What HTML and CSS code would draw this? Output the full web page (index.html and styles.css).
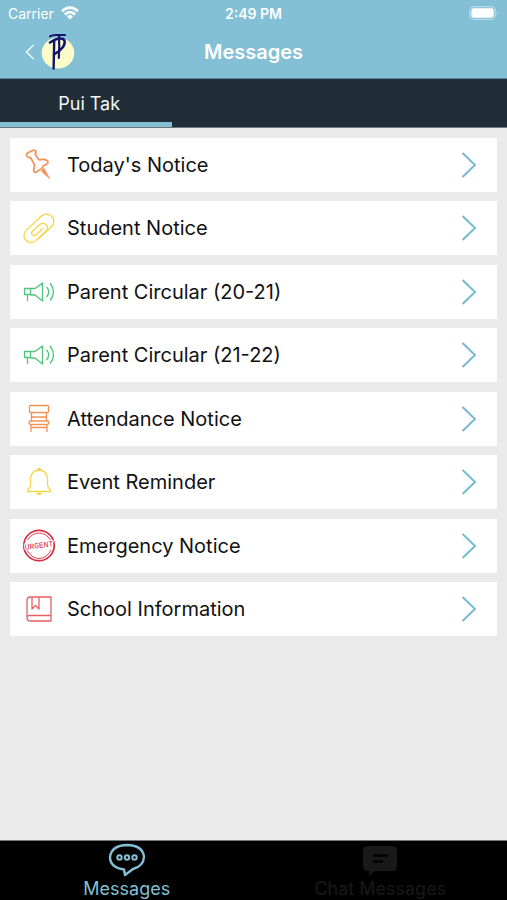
FILE: index.html
```html
<!DOCTYPE html>
<html lang="en">
<head>
    <meta charset="utf-8">
    <meta name="viewport" content="width=device-width, initial-scale=1">
    <title>Messages</title>
    <link rel="stylesheet" href="styles.css">
</head>
<body>

<header class="header">
    <div class="status">
        <div class="carrier">
            <span>Carrier</span>
            <svg width="18" height="14" viewBox="0 0 18 14" fill="none" stroke="#fff" stroke-width="2.6">
                <path d="M1 5.2Q9-2 17 5.2M3.8 8.4q5.2-4.4 10.4 0"/>
                <path d="M9 13.4L5.9 10.3q3.1-2.4 6.2 0z" fill="#fff" stroke="none"/>
            </svg>
        </div>
        <div class="time">2:49 PM</div>
        <div class="battery">
            <svg width="30" height="14" viewBox="0 0 30 14">
                <rect x="0.7" y="0.7" width="25.6" height="12.6" rx="4" fill="none" stroke="#b4dbe7" stroke-width="1.2"/>
                <rect x="2.3" y="2.3" width="22.4" height="9.4" rx="2.4" fill="#fff"/>
                <path d="M27.7 5q2 2 0 4z" fill="#b4dbe7"/>
            </svg>
        </div>
    </div>
    <div class="nav">
        <button class="back" type="button" aria-label="Back">
            <svg width="10" height="16" viewBox="0 0 10 16" fill="none" stroke="#fff" stroke-width="1.2"><path d="M8.6 1L1.4 8l7.2 7"/></svg>
            <svg width="34" height="38" viewBox="0 0 34 38">
                <ellipse cx="17" cy="20" rx="16.3" ry="15.5" fill="#fcfbc9"/>
                <g fill="none" stroke="#14146c" stroke-linecap="round" stroke-linejoin="round">
                    <path d="M9 3.4q2-1.4 6-1.4h9" stroke-width="2.2"/>
                    <path d="M13.2 8L12.600 35.500" stroke-width="2.400"/>
                    <path d="M18 3q.6 11-.2 22" stroke-width="2.200"/>
                    <path d="M9 9.500q8-5.500 13-3.500 3.500 2 0 8-3 4-9 7.500" stroke-width="2.600"/>
                </g>
            </svg>
        </button>
        <h1 class="title">Messages</h1>
    </div>
</header>

<nav class="tabs">
    <button class="tab" type="button">Pui Tak</button>
</nav>

<main class="content">
    <ul class="list">
        <li class="item">
            <a class="link" href="#today">
                <svg class="icon orange" viewBox="0 0 34 34">
                    <path d="M4.500 7.500Q4 6 5.500 5l5-2.500q2.500-1 3.500 1 .5 1.500-1 2.500l4 6q5-1.500 8 .5 2 1.500 0 3.500-1.500 1-3.500 1.500-1.500 4-5.500 5-1 2-2.500 2-2.500-.5-1.500-4.500l.5-3.500-4-7q-3 .5-4-2z" stroke-width="1.700"/>
                    <path d="M19 23l9 8-6-11z" fill="currentColor" stroke-width="0.500"/>
                </svg>
                <span class="label">Today's Notice</span>
                <svg class="arrow" viewBox="0 0 16 28"><path d="M1.5 2L14 14 1.5 26"/></svg>
            </a>
        </li>
        <li class="item">
            <a class="link" href="#student">
                <svg class="icon yellow" viewBox="0 0 34 34">
                    <path transform="rotate(-43 17 17)" d="M20 20H10a2.500 2.500 0 0 1 0-5h10a4.500 4.500 0 0 1 0 9H6a7 7 0 0 1 0-14h21a7 7 0 0 1 0 14.500H8"/>
                </svg>
                <span class="label">Student Notice</span>
                <svg class="arrow" viewBox="0 0 16 28"><path d="M1.5 2L14 14 1.5 26"/></svg>
            </a>
        </li>
        <li class="item">
            <a class="link" href="#circular-20-21">
                <svg class="icon green" viewBox="0 0 34 34">
                    <path d="M2.5 13.5h6v6h-6zM5.500 19.500V26M8.500 13.500h4.500l7.500-5.500v18l-7.500-6H8.500M24.500 12q4.500 4.500 0 10M28 8q7 9 0 17.500"/>
                </svg>
                <span class="label">Parent Circular (20-21)</span>
                <svg class="arrow" viewBox="0 0 16 28"><path d="M1.5 2L14 14 1.5 26"/></svg>
            </a>
        </li>
        <li class="item">
            <a class="link" href="#circular-21-22">
                <svg class="icon green" viewBox="0 0 34 34">
                    <path d="M2.5 13.5h6v6h-6zM5.500 19.500V26M8.500 13.500h4.500l7.500-5.500v18l-7.500-6H8.500M24.500 12q4.500 4.500 0 10M28 8q7 9 0 17.500"/>
                </svg>
                <span class="label">Parent Circular (21-22)</span>
                <svg class="arrow" viewBox="0 0 16 28"><path d="M1.5 2L14 14 1.5 26"/></svg>
            </a>
        </li>
        <li class="item">
            <a class="link" href="#attendance">
                <svg class="icon orange" viewBox="0 0 34 34">
                    <rect x="7.5" y="3.5" width="19" height="7" rx="1"/>
                    <path d="M9.5 10.5v8.500M24.500 10.500v8.500M9.500 15h15M9 30v-7.500M25 30v-7.500M9 25.500h16"/>
                    <rect x="7" y="19" width="20" height="3.500" rx="1.700"/>
                </svg>
                <span class="label">Attendance Notice</span>
                <svg class="arrow" viewBox="0 0 16 28"><path d="M1.5 2L14 14 1.5 26"/></svg>
            </a>
        </li>
        <li class="item">
            <a class="link" href="#event">
                <svg class="icon yellow" viewBox="0 0 34 34">
                    <path d="M17 5q7.500.5 8.500 8v7q.5 3 3 5v1.500h-23V25q3-2 3-5v-7Q9.500 5.500 17 5z"/>
                    <path d="M15.500 4.500q1.500-2 3 0M15 28.500q2 1.500 4 0z"/>
                </svg>
                <span class="label">Event Reminder</span>
                <svg class="arrow" viewBox="0 0 16 28"><path d="M1.5 2L14 14 1.5 26"/></svg>
            </a>
        </li>
        <li class="item">
            <a class="link" href="#emergency">
                <svg class="icon urgent" viewBox="0 0 34 34">
                    <circle cx="17" cy="16.500" r="15.200" stroke-width="1.700"/>
                    <path d="M5.500 11Q10 4 17 4T28.500 11M5 21q4.500 8.500 12 8.500T29 21" stroke-width="0.900"/>
                    <text class="stamp" x="17" y="19" transform="rotate(-7 17 17)">URGENT</text>
                </svg>
                <span class="label">Emergency Notice</span>
                <svg class="arrow" viewBox="0 0 16 28"><path d="M1.5 2L14 14 1.5 26"/></svg>
            </a>
        </li>
        <li class="item">
            <a class="link" href="#school">
                <svg class="icon red" viewBox="0 0 34 34">
                    <path d="M29 23.500V5H8.500Q5 5 5 8.500V26q0 3 3.500 3H29v-5.500H8Q5 23.500 5 26M10 5v12l3.500-3.500 3.500 3.500V5"/>
                </svg>
                <span class="label">School Information</span>
                <svg class="arrow" viewBox="0 0 16 28"><path d="M1.5 2L14 14 1.5 26"/></svg>
            </a>
        </li>
    </ul>
</main>

<footer class="bottom">
    <button class="bottom-tab active" type="button">
        <svg width="38" height="34" viewBox="0 0 38 34" fill="none" stroke="currentColor">
            <path d="M16 26.500Q2 24.500 2 14 3.500 2.500 19 2q16 .5 17 12-.5 9-11 12L17 32z" stroke-width="2.400" stroke-linejoin="round"/>
            <g stroke-width="2"><circle cx="11.500" cy="14.500" r="2.200"/><circle cx="19" cy="14.500" r="2.200"/><circle cx="26.500" cy="14.500" r="2.200"/></g>
        </svg>
        <span>Messages</span>
    </button>
    <button class="bottom-tab" type="button">
        <svg width="38" height="34" viewBox="0 0 38 34">
            <path d="M7 3h24q5 0 5 5v15q0 5-5 5H14l-6 5v-5Q2 28 2 23V8q0-5 5-5z" fill="currentColor"/>
            <path d="M12 12.500h15M12 18.500h10" stroke="#000" stroke-width="2.500"/>
        </svg>
        <span>Chat Messages</span>
    </button>
</footer>

</body>
</html>
```

FILE: styles.css
```css
* {
    box-sizing: border-box;
}

body {
    margin: 0;
    min-height: 100vh;
    display: flex;
    flex-direction: column;
    background-color: #eaeaea;
    font-family: Inter, Roboto, sans-serif;
}

button {
    border: none;
    padding: 0;
    background: none;
    font-family: inherit;
    cursor: pointer;
}

svg {
    display: block;
    flex-shrink: 0;
}

.header {
    background-color: #83c0d6;
    border-bottom: 1px solid #56879a;
    color: white;
}

.status {
    display: grid;
    grid-template-columns: 1fr auto 1fr;
    align-items: center;
    height: 26px;
    padding: 0 8px;
    font-size: 14px;
}

.carrier {
    display: flex;
    align-items: center;
    gap: 7px;
}

.time {
    font-weight: 600;
}

.battery {
    justify-self: end;
}

.nav {
    display: grid;
    grid-template-columns: 1fr auto 1fr;
    align-items: center;
    height: 52px;
    padding: 0 25px;
}

.back {
    display: flex;
    align-items: center;
    gap: 6px;
}

.title {
    margin: 0;
    font-size: 20px;
    font-weight: 600;
}

.tabs {
    height: 49px;
    background-color: #212e37;
    border-bottom: 1px solid #70777c;
}

.tab {
    width: 34%;
    height: 48px;
    padding: 5px 0 0 6px;
    border-bottom: 5px solid #83c0d6;
    color: #f4f6f7;
    font-size: 18px;
}

.content {
    flex: 1;
    padding: 10px;
}

.list {
    margin: 0;
    padding: 0;
    list-style: none;
}

.item {
    margin-bottom: 9px;
    background-color: white;
    border-radius: 1px;
}

.item:nth-child(even) {
    margin-bottom: 10px;
}

.link {
    display: flex;
    align-items: center;
    height: 54px;
    padding: 0 20px 0 12px;
    color: #111;
    text-decoration: none;
}

.label {
    flex: 1;
    margin-left: 11px;
    font-size: 20px;
}

.icon {
    width: 34px;
    height: 34px;
    fill: none;
    stroke: currentColor;
    stroke-width: 1.3;
    stroke-linejoin: round;
}

.orange {
    color: #f39257;
}

.yellow {
    color: #f5d547;
}

.green {
    color: #50c47c;
}

.urgent {
    color: #d92a3f;
}

.red {
    color: #e5605f;
}

.stamp {
    fill: currentColor;
    stroke: white;
    stroke-width: 2;
    paint-order: stroke;
    font-family: "Liberation Mono", monospace;
    font-size: 8px;
    text-anchor: middle;
}

.arrow {
    width: 16px;
    height: 28px;
    fill: none;
    stroke: #76bbd1;
    stroke-width: 2;
}

.bottom {
    display: flex;
    height: 60px;
    background-color: black;
    border-top: 1px solid #777;
}

.bottom-tab {
    flex: 1;
    display: flex;
    flex-direction: column;
    align-items: center;
    padding-top: 2px;
    color: #191919;
    font-size: 18px;
    line-height: 24px;
}

.active {
    color: #83c0d6;
}
```
